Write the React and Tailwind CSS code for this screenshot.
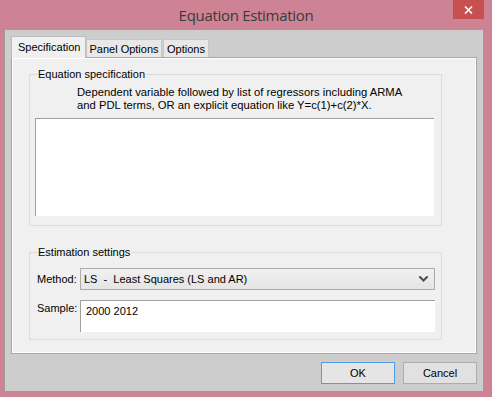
import React from 'react';

const uiFont = { fontFamily: '"Liberation Sans", Arial, sans-serif' };

function Tab({ label, selected, width }) {
  if (selected) {
    return (
      <div className={`relative z-10 -mb-px flex h-[22px] items-start border border-b-0 border-[#bdbdbd] bg-[#f0f0f0] pt-[4px] pl-[6px] text-[11px] leading-[13px] text-black ${width}`}>
        {label}
      </div>
    );
  }
  return (
    <div className={`mt-[3px] flex h-[18px] items-start justify-center border border-b-0 border-[#c6c6c6] bg-[#e8e8e8] pt-[3px] text-[11px] leading-[13px] text-black ${width}`}>
      {label}
    </div>
  );
}

function Chevron() {
  return (
    <svg className="h-[6px] w-[9px]" viewBox="0 0 9 6" fill="none">
      <path d="M1 1l3.5 3.5L8 1" stroke="#505050" strokeWidth="2" strokeLinecap="square" />
    </svg>
  );
}

export default function App() {
  return (
    <div className="flex h-[397px] w-[492px] flex-col bg-[#cd8394]" style={uiFont}>
      <div className="relative flex h-[29px] items-center justify-center">
        <span className="text-[15px] leading-[20px] tracking-[-0.3px] text-[#3a3a3a]" style={{ fontFamily: '"Open Sans", "Noto Sans", sans-serif' }}>
          Equation Estimation
        </span>
        <button className="absolute top-0 right-[8px] flex h-[19px] w-[31px] items-center justify-center bg-[#c75050]">
          <svg className="h-[8px] w-[9px]" viewBox="0 0 9 8" fill="none">
            <path d="M1 0.5l7 7M8 0.5l-7 7" stroke="#ffffff" strokeWidth="1.6" />
          </svg>
        </button>
      </div>

      <div className="ml-[4px] mr-[8px] flex h-[363px] flex-col border border-[#9c9c9c] bg-[#cdcdcd] px-[6px] pt-[6px]">
        <div className="flex items-end">
          <Tab label="Specification" selected width="w-[75px]" />
          <Tab label="Panel Options" width="w-[76px]" />
          <div className="ml-px">
            <Tab label="Options" width="w-[46px]" />
          </div>
        </div>

        <div className="flex h-[297px] flex-col border border-[#a8a8a8] bg-[#f0f0f0] shadow-[inset_0_0_0_1px_#ffffff]">
          <fieldset className="mt-[10px] ml-[17px] mr-[34px] border border-[#dcdcdc] pb-[9px] pl-[5px] pr-[7px]">
            <legend className="ml-[2px] px-px text-[11px] leading-[13px] text-black">Equation specification</legend>
            <div className="mt-[5px] ml-[42px] text-[11.25px] leading-[13px] text-black">
              <div>Dependent variable followed by list of regressors including ARMA</div>
              <div>and PDL terms, OR an explicit equation like Y=c(1)+c(2)*X.</div>
            </div>
            <div className="mt-[6px] h-[98px] border-t border-l border-[#a0a0a0] bg-white" />
          </fieldset>

          <fieldset className="mt-[20px] ml-[17px] mr-[34px] border border-[#dcdcdc] pb-[7px] pl-[5px] pr-[6px]">
            <legend className="ml-[2px] px-px text-[11px] leading-[13px] text-black">Estimation settings</legend>
            <div className="mt-[9px] flex items-center">
              <span className="ml-[2px] w-[43px] text-[11px] leading-[13px] text-black">Method:</span>
              <div className="flex h-[22px] flex-1 items-center justify-between border border-[#acacac] bg-gradient-to-b from-[#f0f0f0] to-[#e5e5e5] pl-[3px] pr-[6px]">
                <span className="whitespace-pre text-[11px] leading-[13px] text-black">LS  -  Least Squares (LS and AR)</span>
                <Chevron />
              </div>
            </div>
            <div className="mt-[10px] flex items-start">
              <span className="ml-[2px] mt-[2px] w-[43px] text-[11px] leading-[13px] text-black">Sample:</span>
              <div className="h-[32px] flex-1 border-t border-l border-[#a0a0a0] bg-white pl-[5px] pt-[4px] text-[11px] leading-[13px] text-black">
                2000 2012
              </div>
            </div>
          </fieldset>
        </div>

        <div className="mt-[8px] flex justify-end gap-[8px]">
          <button className="h-[22px] w-[74px] border border-[#4f9de8] bg-[#e5e5e5] text-[11px] text-black">OK</button>
          <button className="h-[22px] w-[74px] border border-[#adadad] bg-[#e1e1e1] text-[11px] text-black">Cancel</button>
        </div>
      </div>
    </div>
  );
}
